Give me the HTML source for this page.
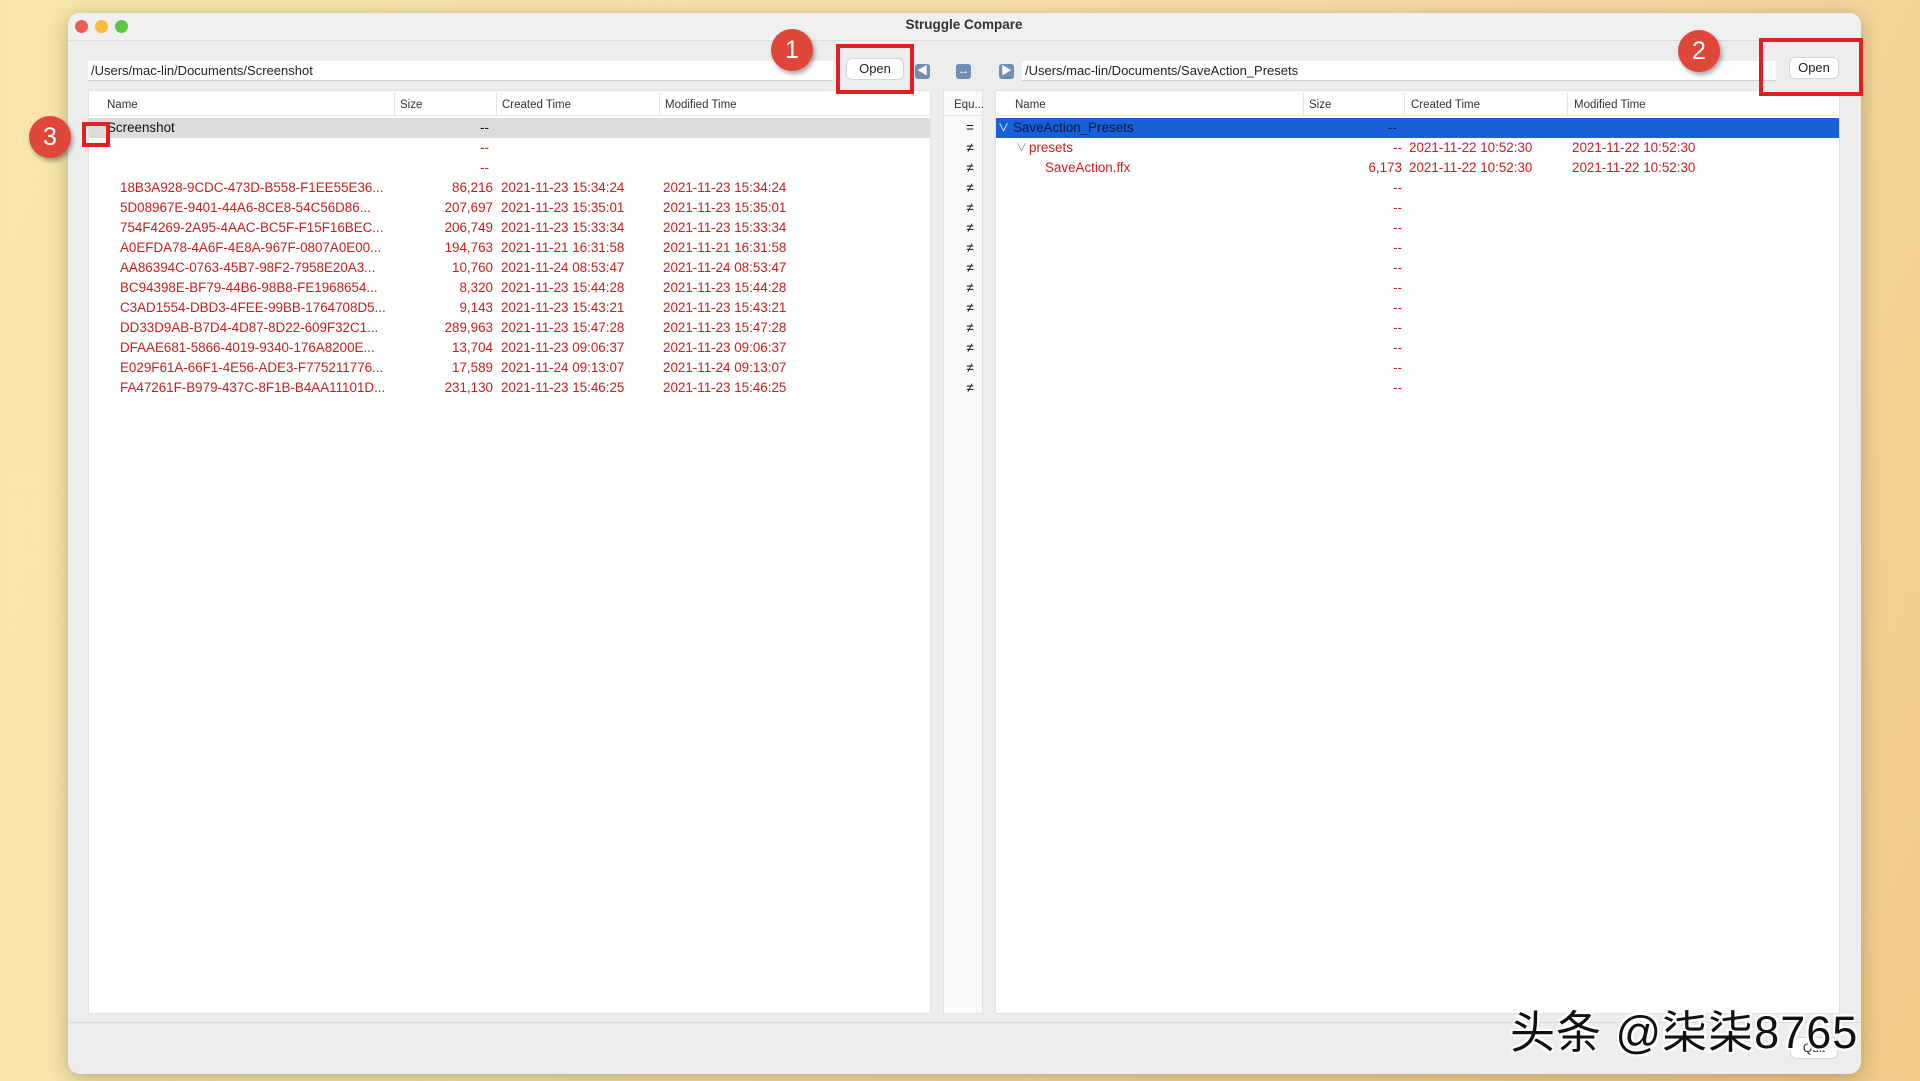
<!DOCTYPE html>
<html><head><meta charset="utf-8"><style>
*{margin:0;padding:0;box-sizing:border-box}
body{width:1920px;height:1081px;overflow:hidden;position:relative;font-family:"Liberation Sans","Noto Sans CJK SC",sans-serif;
background:linear-gradient(115deg,#f7e6a8 0%,#f8e2ab 40%,#f6d7a0 70%,#f2c987 100%);}
.a{position:absolute}
.win{left:68px;top:13px;width:1793px;height:1061px;background:#ededed;border-radius:12px;box-shadow:0 4px 20px rgba(0,0,0,.25);overflow:hidden}
.tb{left:0;top:0;width:1793px;height:28px;background:#f0f0f0;border-bottom:1px solid #dcdcdc}
.dot{width:13px;height:13px;border-radius:50%;top:20px}
.field{background:#fff;border-bottom:1px solid #d0d0d0;height:20px;font-size:13px;line-height:20px;padding-left:3px;color:#222}
.btn{background:#fff;border-radius:5px;box-shadow:0 0 0 1px #d6d6d6;font-size:13px;text-align:center;line-height:20px;height:20px;color:#222}
.rb{border:4px solid #e02020;z-index:5}
.circ{border-radius:50%;background:#e0473b;color:#fff;font-size:25px;text-align:center;width:42px;height:42px;line-height:42px;box-shadow:2px 3px 5px rgba(0,0,0,.35);z-index:5}
.panel{background:#fff;border:1px solid #e2e2e2}
.hd{font-size:11.5px;color:#333;top:99px}
.sep{width:1px;background:#e4e4e4;top:93px;height:22px}
.t{font-size:13.4px;color:#c42020;white-space:nowrap;line-height:20px;height:20px}
.k{color:#111}
.ic{width:15px;height:15px;border-radius:3px;background:#6f8eb3;color:#fff;font-size:11px;line-height:15px;text-align:center;top:64px}
</style></head><body>
<div class="a win"></div>
<div class="a tb" style="left:68px;top:13px;border-radius:12px 12px 0 0"></div>
<div class="a dot" style="left:75px;background:#ee5d54"></div>
<div class="a dot" style="left:95px;background:#f5bd3b"></div>
<div class="a dot" style="left:115px;background:#5fc443"></div>
<div class="a" style="left:0;width:1928px;top:17px;text-align:center;font-size:13.5px;font-weight:bold;color:#333">Struggle Compare</div>

<!-- left top -->
<div class="a field" style="left:88px;top:61px;width:745px">/Users/mac-lin/Documents/Screenshot</div>
<div class="a btn" style="left:847px;top:59px;width:56px">Open</div>
<div class="a rb" style="left:836px;top:44px;width:78px;height:50px"></div>
<div class="a circ" style="left:771px;top:29px">1</div>
<div class="a ic" style="left:915px">&#9664;</div>
<div class="a ic" style="left:956px">&#8596;</div>
<div class="a ic" style="left:999px">&#9654;</div>

<!-- right top -->
<div class="a field" style="left:1022px;top:61px;width:754px">/Users/mac-lin/Documents/SaveAction_Presets</div>
<div class="a btn" style="left:1790px;top:58px;width:48px">Open</div>
<div class="a rb" style="left:1759px;top:38px;width:104px;height:58px"></div>
<div class="a circ" style="left:1678px;top:30px">2</div>

<!-- panels -->
<div class="a panel" style="left:88px;top:90px;width:843px;height:924px"></div>
<div class="a panel" style="left:943px;top:90px;width:40px;height:924px;background:#fafafa"></div>
<div class="a panel" style="left:995px;top:90px;width:845px;height:924px"></div>
<div class="a" style="left:88px;top:115px;width:843px;height:1px;background:#e6e6e6"></div>
<div class="a" style="left:995px;top:115px;width:845px;height:1px;background:#e6e6e6"></div>
<div class="a" style="left:943px;top:115px;width:40px;height:1px;background:#e6e6e6"></div>

<div class="a hd" style="left:107px">Name</div>
<div class="a sep" style="left:394px"></div><div class="a hd" style="left:400px">Size</div>
<div class="a sep" style="left:496px"></div><div class="a hd" style="left:502px">Created Time</div>
<div class="a sep" style="left:659px"></div><div class="a hd" style="left:665px">Modified Time</div>
<div class="a hd" style="left:954px">Equ...</div>
<div class="a hd" style="left:1015px">Name</div>
<div class="a sep" style="left:1303px"></div><div class="a hd" style="left:1309px">Size</div>
<div class="a sep" style="left:1404px"></div><div class="a hd" style="left:1411px">Created Time</div>
<div class="a sep" style="left:1567px"></div><div class="a hd" style="left:1574px">Modified Time</div>

<div class="a" style="left:89px;top:118px;width:841px;height:20px;background:#dcdcdc"></div>
<div class="a" style="left:996px;top:118px;width:843px;height:20px;background:#1a5fd8"></div>

<div class="a" style="left:0;top:118px">
<div class="a t k" style="left:107px;top:0">Screenshot</div>
<div class="a t k" style="left:480px;top:0">--</div>
<div class="a t" style="left:480px;top:20px">--</div>
<div class="a t" style="left:480px;top:40px">--</div>
<div class="a t" style="left:104px;top:16px;color:#666;font-size:11px">&#8964;</div>
</div>

<div class="a" style="left:0;top:178px">
<div class="a t" style="left:120px;top:0">18B3A928-9CDC-473D-B558-F1EE55E36...</div>
<div class="a t" style="left:120px;top:20px">5D08967E-9401-44A6-8CE8-54C56D86...</div>
<div class="a t" style="left:120px;top:40px">754F4269-2A95-4AAC-BC5F-F15F16BEC...</div>
<div class="a t" style="left:120px;top:60px">A0EFDA78-4A6F-4E8A-967F-0807A0E00...</div>
<div class="a t" style="left:120px;top:80px">AA86394C-0763-45B7-98F2-7958E20A3...</div>
<div class="a t" style="left:120px;top:100px">BC94398E-BF79-44B6-98B8-FE1968654...</div>
<div class="a t" style="left:120px;top:120px">C3AD1554-DBD3-4FEE-99BB-1764708D5...</div>
<div class="a t" style="left:120px;top:140px">DD33D9AB-B7D4-4D87-8D22-609F32C1...</div>
<div class="a t" style="left:120px;top:160px">DFAAE681-5866-4019-9340-176A8200E...</div>
<div class="a t" style="left:120px;top:180px">E029F61A-66F1-4E56-ADE3-F775211776...</div>
<div class="a t" style="left:120px;top:200px">FA47261F-B979-437C-8F1B-B4AA11101D...</div>
<div class="a" style="left:400px;top:0;width:93px;text-align:right">
<div class="t">86,216</div><div class="t">207,697</div><div class="t">206,749</div><div class="t">194,763</div><div class="t">10,760</div><div class="t">8,320</div><div class="t">9,143</div><div class="t">289,963</div><div class="t">13,704</div><div class="t">17,589</div><div class="t">231,130</div></div>
<div class="a" style="left:501px;top:0">
<div class="t">2021-11-23 15:34:24</div><div class="t">2021-11-23 15:35:01</div><div class="t">2021-11-23 15:33:34</div><div class="t">2021-11-21 16:31:58</div><div class="t">2021-11-24 08:53:47</div><div class="t">2021-11-23 15:44:28</div><div class="t">2021-11-23 15:43:21</div><div class="t">2021-11-23 15:47:28</div><div class="t">2021-11-23 09:06:37</div><div class="t">2021-11-24 09:13:07</div><div class="t">2021-11-23 15:46:25</div></div>
<div class="a" style="left:663px;top:0">
<div class="t">2021-11-23 15:34:24</div><div class="t">2021-11-23 15:35:01</div><div class="t">2021-11-23 15:33:34</div><div class="t">2021-11-21 16:31:58</div><div class="t">2021-11-24 08:53:47</div><div class="t">2021-11-23 15:44:28</div><div class="t">2021-11-23 15:43:21</div><div class="t">2021-11-23 15:47:28</div><div class="t">2021-11-23 09:06:37</div><div class="t">2021-11-24 09:13:07</div><div class="t">2021-11-23 15:46:25</div></div>
</div>

<!-- equ column -->
<div class="a" style="left:963px;top:118px;width:14px;text-align:center">
<div class="t k">=</div><div class="t k">≠</div><div class="t k">≠</div><div class="t k">≠</div><div class="t k">≠</div><div class="t k">≠</div><div class="t k">≠</div><div class="t k">≠</div><div class="t k">≠</div><div class="t k">≠</div><div class="t k">≠</div><div class="t k">≠</div><div class="t k">≠</div><div class="t k">≠</div></div>

<!-- right rows -->
<div class="a t" style="left:998px;top:118px;color:#fff;font-size:11px">&#8744;</div>
<div class="a t k" style="left:1013px;top:118px;color:#0a1a40">SaveAction_Presets</div>
<div class="a t k" style="left:1388px;top:118px;color:#0a1a40">--</div>
<div class="a t" style="left:1016px;top:138px;color:#888;font-size:11px">&#8744;</div>
<div class="a t" style="left:1029px;top:138px">presets</div>
<div class="a t" style="left:1045px;top:158px">SaveAction.ffx</div>
<div class="a" style="left:1330px;top:138px;width:72px;text-align:right">
<div class="t">--</div><div class="t">6,173</div><div class="t">--</div><div class="t">--</div><div class="t">--</div><div class="t">--</div><div class="t">--</div><div class="t">--</div><div class="t">--</div><div class="t">--</div><div class="t">--</div><div class="t">--</div><div class="t">--</div></div>
<div class="a" style="left:1409px;top:138px"><div class="t">2021-11-22 10:52:30</div><div class="t">2021-11-22 10:52:30</div></div>
<div class="a" style="left:1572px;top:138px"><div class="t">2021-11-22 10:52:30</div><div class="t">2021-11-22 10:52:30</div></div>

<!-- circle 3 -->
<div class="a circ" style="left:29px;top:116px">3</div>
<div class="a rb" style="left:82px;top:122px;width:28px;height:25px"></div>

<!-- bottom -->
<div class="a" style="left:68px;top:1022px;width:1793px;height:1px;background:#dadada"></div>
<div class="a btn" style="left:1791px;top:1038px;width:46px;font-size:12px">Quit</div>
<div class="a" style="left:1510px;top:996px;font-size:45px;letter-spacing:1px;color:#111;font-family:'Liberation Sans','Noto Sans CJK SC',sans-serif;text-shadow:-2px -2px 0 #fff,2px 2px 0 #fff,2px -2px 0 #fff,-2px 2px 0 #fff;white-space:nowrap;z-index:6">头条 @柒柒8765</div>
</body></html>
